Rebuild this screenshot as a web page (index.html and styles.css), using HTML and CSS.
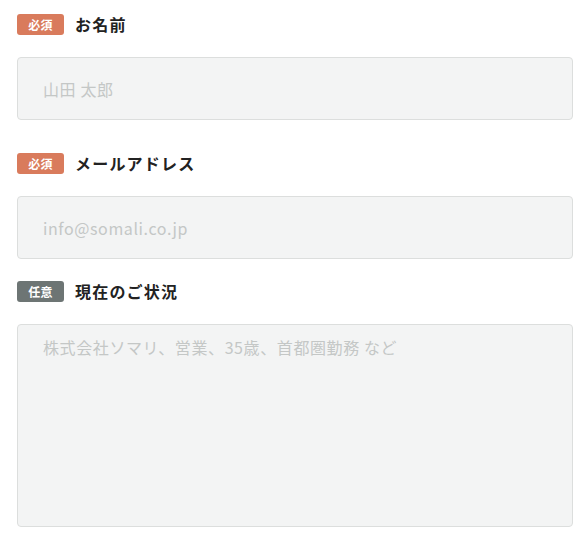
FILE: index.html
```html
<!DOCTYPE html>
<html lang="ja">
<head>
  <meta charset="UTF-8" />
  <title>お問い合わせ</title>
  <link rel="stylesheet" href="styles.css">
</head>
<body>

  <form class="form">
    <div class="field">
      <label class="label" for="name"><span class="badge required">必須</span>お名前</label>
      <input type="text" id="name" class="input" placeholder="山田 太郎" />
    </div>

    <div class="field">
      <label class="label" for="email"><span class="badge required">必須</span>メールアドレス</label>
      <input type="email" id="email" class="input" placeholder="info@somali.co.jp" />
    </div>

    <div class="field">
      <label class="label" for="status"><span class="badge optional">任意</span>現在のご状況</label>
      <textarea id="status" class="input textarea" placeholder="株式会社ソマリ、営業、35歳、首都圏勤務 など"></textarea>
    </div>
  </form>

</body>
</html>
```

FILE: styles.css
```css
body {
  margin: 0;
  padding: 13px 13px 0 17px;
  font-family: "Noto Sans CJK JP", "Noto Sans", sans-serif;
  color: #222;
  background: #fff;
}
.form {
  display: flex;
  flex-direction: column;
}
.field {
  display: flex;
  flex-direction: column;
  gap: 22px;
}
.field:nth-child(1) {
  margin-bottom: 32px;
}
.field:nth-child(2) {
  margin-bottom: 21px;
}
.label {
  display: flex;
  align-items: center;
  gap: 11px;
  height: 22px;
  font-size: 16px;
  font-weight: bold;
  letter-spacing: 1.2px;
}
.badge {
  display: inline-flex;
  align-items: center;
  justify-content: center;
  width: 47px;
  height: 21px;
  border-radius: 3px;
  color: #fff;
  font-size: 12px;
  font-weight: bold;
  letter-spacing: 0.3px;
}
.required {
  background: #d97b5c;
}
.optional {
  background: #6d7574;
}
.input {
  box-sizing: border-box;
  width: 556px;
  height: 63px;
  padding: 0 25px;
  border: 1px solid #dcdedd;
  border-radius: 4px;
  background: #f3f4f4;
  font-family: "Noto Sans CJK JP", "Noto Sans", sans-serif;
  font-size: 16px;
  letter-spacing: 0.6px;
  color: #222;
  outline: none;
}
.input::placeholder {
  color: #c4c7c6;
}
.textarea {
  height: 203px;
  padding: 10px 25px;
  resize: none;
  line-height: 24px;
}
```
